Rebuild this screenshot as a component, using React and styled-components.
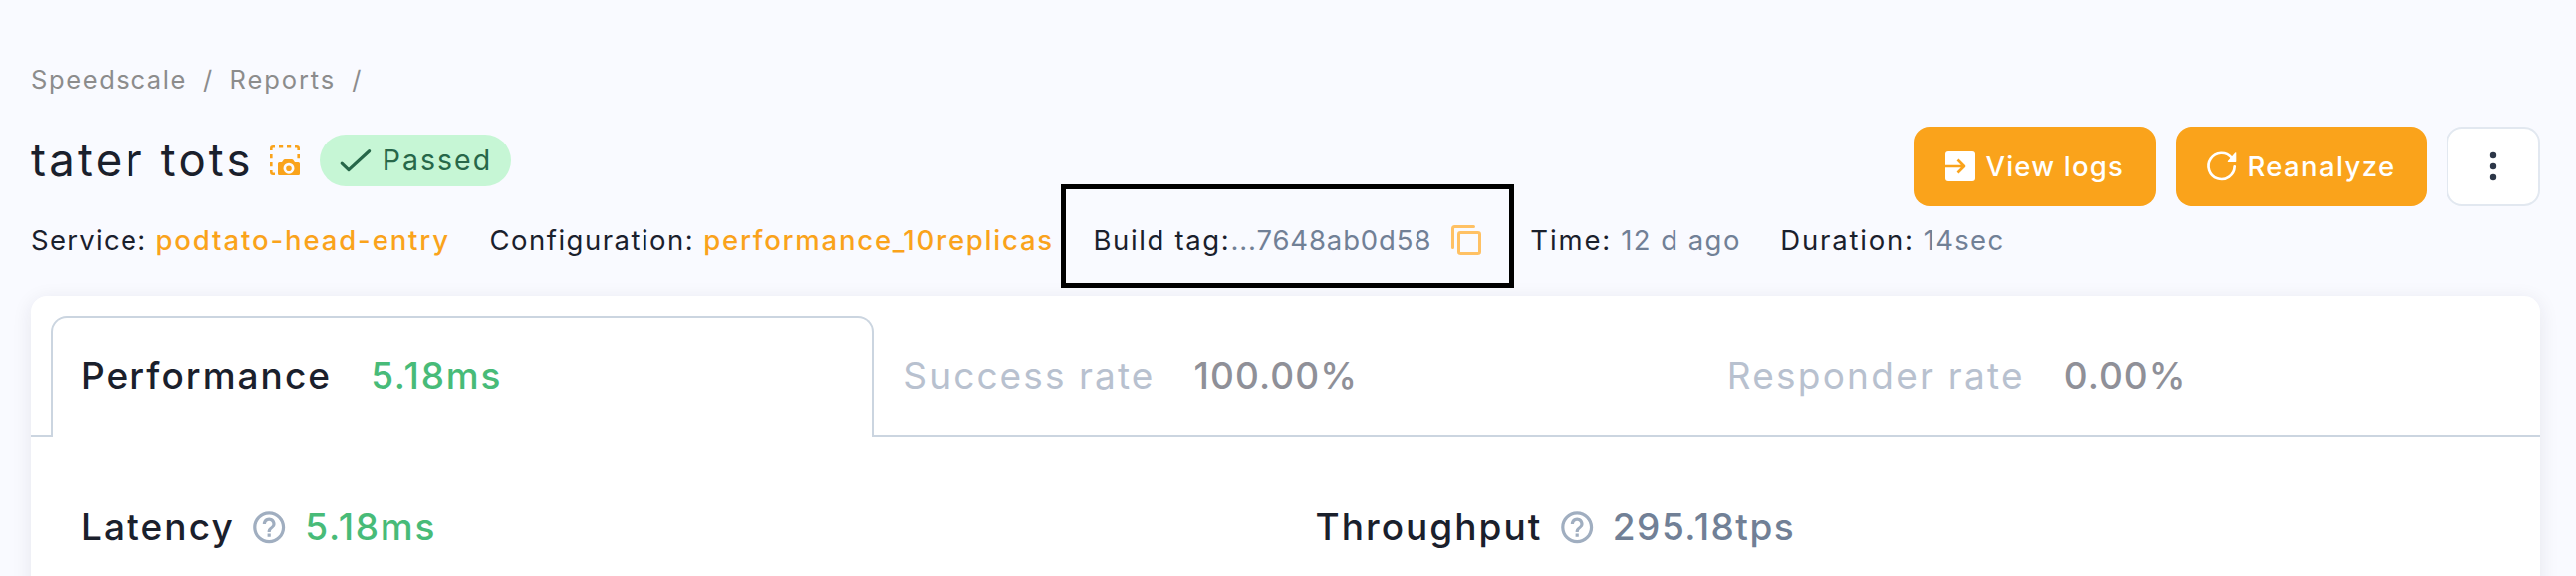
import React from 'react';
import styled, { createGlobalStyle } from 'styled-components';
import { MdHelpOutline } from 'react-icons/md';

const colors = {
  page: '#f9faff',
  ink: '#1a202c',
  muted: '#8c8c8c',
  slate: '#718096',
  orange: '#faa31b',
  green: '#48bb78',
  line: '#cbd5e0',
};

const GlobalStyle = createGlobalStyle`
  * { box-sizing: border-box; }
  body {
    margin: 0;
    background: ${colors.page};
    color: ${colors.ink};
    font-family: 'Inter', 'Liberation Sans', sans-serif;
  }
`;

const Page = styled.main`
  height: 578px;
  overflow: hidden;
  padding: 64px 36px 0 31px;
`;

const Text = styled.span`
  font-size: 27.5px;
  line-height: 38px;
  white-space: pre;
  letter-spacing: ${(p) => p.$track}px;
`;

const Breadcrumbs = styled.nav`
  display: flex;
  gap: 16px;
  height: 32px;
  color: ${colors.muted};
`;

const Crumb = styled(Text)`
  font-size: 25.5px;
  line-height: 32px;
`;

const Header = styled.header`
  display: flex;
  justify-content: space-between;
  margin-top: 31px;
  height: 80px;
`;

const TitleRow = styled.div`
  display: flex;
  align-items: center;
  height: 52px;
  margin-top: 8px;
`;

const Title = styled.h1`
  margin: 0 16px 0 0;
  font-size: 45.5px;
  line-height: 52px;
  font-weight: 400;
  letter-spacing: 3.2px;
`;

const Badge = styled.div`
  display: flex;
  align-items: center;
  gap: 11px;
  width: 192px;
  height: 52px;
  margin-left: 20px;
  padding-left: 20px;
  border-radius: 26px;
  background: #c6f6d5;
  color: #276749;
`;

const BadgeLabel = styled(Text)`
  font-size: 28.5px;
`;

const Actions = styled.div`
  display: flex;
  gap: 20px;
`;

const Button = styled.button`
  display: flex;
  align-items: center;
  gap: 10.5px;
  width: ${(p) => p.$width}px;
  height: 80px;
  padding: 0 0 0 32px;
  border: 0;
  border-radius: 16px;
  background: ${colors.orange};
  color: #fff;
  font-family: inherit;
  font-weight: 500;
`;

const MenuButton = styled(Button)`
  justify-content: center;
  padding: 0;
  border: 2px solid #e2e8f0;
  background: #fff;
  color: #2d3748;
`;

const Meta = styled.div`
  display: flex;
  align-items: center;
  gap: 39.5px;
  height: 38px;
  margin-top: 15px;
`;

const Field = styled.div`
  position: relative;
  display: flex;
  align-items: center;
  gap: ${(p) => p.$gap ?? 9}px;
  margin-right: ${(p) => p.$after ?? 0}px;
`;

const Highlight = styled.div`
  position: absolute;
  inset: -37.5px -33px -28.5px -32px;
  border: 5px solid #000;
`;

const FieldLink = styled(Text)`
  color: ${colors.orange};
  font-weight: 500;
`;

const FieldValue = styled(Text)`
  color: ${colors.slate};
`;

const Card = styled.section`
  height: 360px;
  margin-top: 37px;
  padding-top: 20px;
  border-radius: 16px;
  background: #fff;
  box-shadow: 0 4px 20px rgba(30, 30, 60, 0.09);
`;

const TabList = styled.div`
  display: grid;
  grid-template-columns: repeat(3, 1fr);
  height: 122px;
  padding: 0 20px;
  border-bottom: 2px solid ${colors.line};
`;

const Tab = styled.div`
  display: flex;
  align-items: center;
  gap: 39px;
  height: 122px;
  padding: 0 0 4px 28px;
  border: 2px solid ${(p) => (p.$active ? colors.line : 'transparent')};
  border-bottom: 0;
  border-radius: 16px 16px 0 0;
  background: ${(p) => (p.$active ? '#fff' : 'none')};
`;

const Big = styled(Text)`
  font-size: 37px;
  line-height: 44px;
  font-weight: ${(p) => p.$weight ?? 500};
  color: ${(p) => p.$color ?? colors.ink};
`;

const Metrics = styled.div`
  display: grid;
  grid-template-columns: 1fr 1fr;
  padding: 68px 20px 0;
`;

const Metric = styled.div`
  display: flex;
  align-items: center;
  gap: 16.5px;
  padding-left: 30px;
  height: 44px;
`;

const HelpIcon = styled(MdHelpOutline)`
  flex: none;
  width: 38.4px;
  height: 38.4px;
  margin-left: -1px;
  color: #a0aec0;
`;

const Icon = styled.svg`
  display: block;
  flex: none;
  overflow: visible;
`;

const SnapshotIcon = () => (
  <Icon width="30" height="30" viewBox="0 0 30 30" fill="none" stroke={colors.orange} strokeWidth="2.6">
    <path d="M1.3 5V3.2Q1.3 1.3 3.2 1.3H5M9 1.3h4.2M17 1.3h4.2M25 1.3h1.8q1.9 0 1.9 1.9V5M1.3 9v4.2M1.3 17v4.2M28.7 9v4.2M1.3 25v1.8q0 1.9 1.9 1.9H5" />
    <path
      stroke="none"
      fill={colors.orange}
      fillRule="evenodd"
      d="M9.5 17H12l1.8-2.4q.5-.6 1.2-.6h7q.7 0 1.2.6L25 17h3.5q1.5 0 1.5 1.5V28.5q0 1.5-1.5 1.5H9.5Q8 30 8 28.5V18.5Q8 17 9.5 17ZM19 17.7a5.5 5.5 0 1 0 0 11a5.5 5.5 0 1 0 0-11ZM19 20.4a2.8 2.8 0 1 1 0 5.6a2.8 2.8 0 1 1 0-5.6Z"
    />
  </Icon>
);

const CheckIcon = () => (
  <Icon width="32" height="30" viewBox="0 0 32 30" fill="none" stroke="currentColor" strokeWidth="3.2" strokeLinecap="round" strokeLinejoin="round">
    <path d="M2.2 18.2L9 24.6L29.6 5.7" />
  </Icon>
);

const LogsIcon = () => (
  <Icon width="30" height="30" viewBox="0 0 30 30">
    <rect width="30" height="30" rx="3" fill="#fff" />
    <path d="M0 15H18.5M12.5 8.5L19 15L12.5 21.5" fill="none" stroke={colors.orange} strokeWidth="2.7" strokeLinejoin="round" />
  </Icon>
);

const ReloadIcon = () => (
  <Icon width="30" height="30" viewBox="0 0 30 30">
    <path d="M27.7 15.3A13.1 13.1 0 1 1 24.7 6.5" fill="none" stroke="#fff" strokeWidth="2.7" strokeLinecap="round" />
    <path d="M28.7 1.8V10.3H21.3Z" fill="#fff" stroke="#fff" strokeWidth="1.2" strokeLinejoin="round" />
  </Icon>
);

const DotsIcon = () => (
  <Icon width="8" height="30" viewBox="0 0 8 30" fill="currentColor">
    <circle cx="4" cy="4" r="3.2" />
    <circle cx="4" cy="15" r="3.2" />
    <circle cx="4" cy="26" r="3.2" />
  </Icon>
);

const CopyIcon = () => (
  <Icon width="30" height="30" viewBox="0 0 30 30" fill="none" stroke="#ffc164" strokeWidth="3" strokeLinecap="round">
    <path d="M1.5 22.5V3.5Q1.5 1.5 3.5 1.5H22.5" />
    <rect x="7.5" y="7.5" width="21" height="21" rx="1.8" />
  </Icon>
);

export default function App() {
  return (
    <Page>
      <GlobalStyle />
      <Breadcrumbs>
        <Crumb $track={1.61}>Speedscale</Crumb>
        <Crumb $track={1.3}>/</Crumb>
        <Crumb $track={1.9}>Reports</Crumb>
        <Crumb $track={1.3}>/</Crumb>
      </Breadcrumbs>
      <Header>
        <TitleRow>
          <Title>tater tots</Title>
          <SnapshotIcon />
          <Badge>
            <CheckIcon />
            <BadgeLabel $track={2}>Passed</BadgeLabel>
          </Badge>
        </TitleRow>
        <Actions>
          <Button $width={243}>
            <LogsIcon />
            <Text $track={1.21}>View logs</Text>
          </Button>
          <Button $width={252}>
            <ReloadIcon />
            <Text $track={1.38}>Reanalyze</Text>
          </Button>
          <MenuButton $width={94}>
            <DotsIcon />
          </MenuButton>
        </Actions>
      </Header>
      <Meta>
        <Field>
          <Text $track={1.28}>Service:</Text>
          <FieldLink $track={1.87}>podtato-head-entry</FieldLink>
        </Field>
        <Field>
          <Text $track={1.49}>Configuration:</Text>
          <FieldLink $track={1.77}>performance_10replicas</FieldLink>
        </Field>
        <Field $gap={19.5} $after={10}>
          <span>
            <Text $track={1.65}>Build tag:</Text>
            <FieldValue $track={0.87}>...7648ab0d58</FieldValue>
          </span>
          <CopyIcon />
          <Highlight />
        </Field>
        <Field>
          <Text $track={1.89}>Time:</Text>
          <FieldValue $track={1.45}>12 d ago</FieldValue>
        </Field>
        <Field>
          <Text $track={1.8}>Duration:</Text>
          <FieldValue $track={1.28}>14sec</FieldValue>
        </Field>
      </Meta>
      <Card>
        <TabList>
          <Tab $active>
            <Big $track={2.05}>Performance</Big>
            <Big $track={1.77} $color={colors.green}>5.18ms</Big>
          </Tab>
          <Tab>
            <Big $track={2.1} $weight={400} $color="#b8c1cf">Success rate</Big>
            <Big $track={1.1} $color="#8f9098">100.00%</Big>
          </Tab>
          <Tab>
            <Big $track={2.25} $weight={400} $color="#b8c1cf">Responder rate</Big>
            <Big $track={1} $color="#8f9098">0.00%</Big>
          </Tab>
        </TabList>
        <Metrics>
          <Metric>
            <Big $track={2.11}>Latency</Big>
            <HelpIcon />
            <Big $track={1.77} $color={colors.green}>5.18ms</Big>
          </Metric>
          <Metric>
            <Big $track={2.04}>Throughput</Big>
            <HelpIcon />
            <Big $track={1.48} $color={colors.slate}>295.18tps</Big>
          </Metric>
        </Metrics>
      </Card>
    </Page>
  );
}
